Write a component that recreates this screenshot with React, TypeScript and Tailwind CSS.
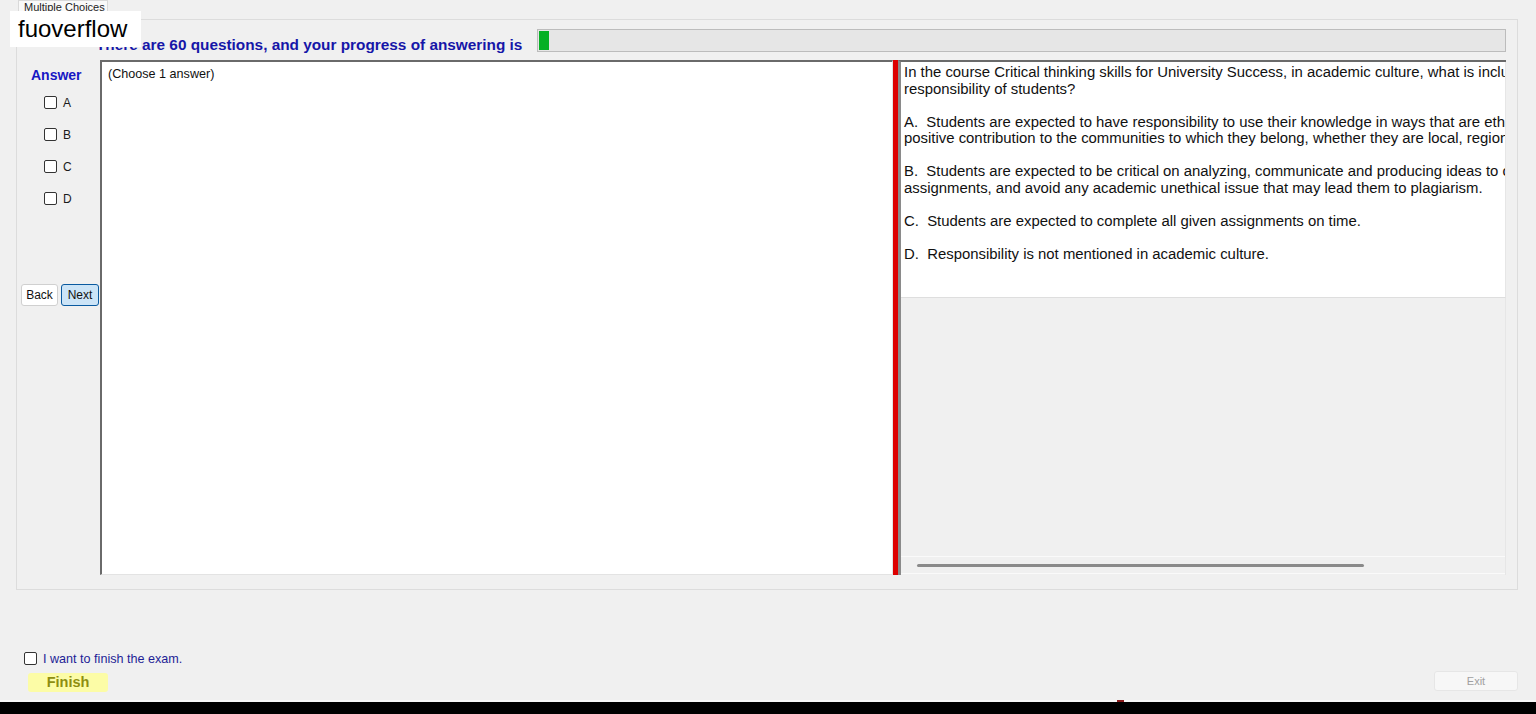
const font = { fontFamily: '"Liberation Sans", Arial, sans-serif' };

const Box = ({ label }: { label?: string }) => (
  <div className="flex items-center gap-[6px] h-[13px]">
    <div className="w-[13px] h-[13px] border border-[#333333] rounded-[2px] bg-white" />
    {label && <span className="text-[12px] text-[#1a1a1a] leading-none">{label}</span>}
  </div>
);

const lines: string[][] = [
  [
    "In the course Critical thinking skills for University Success, in academic culture, what is included in the",
    "responsibility of students?",
  ],
  [
    "A.  Students are expected to have responsibility to use their knowledge in ways that are ethical and make a",
    "positive contribution to the communities to which they belong, whether they are local, regional or global.",
  ],
  [
    "B.  Students are expected to be critical on analyzing, communicate and producing ideas to complete their",
    "assignments, and avoid any academic unethical issue that may lead them to plagiarism.",
  ],
  ["C.  Students are expected to complete all given assignments on time."],
  ["D.  Responsibility is not mentioned in academic culture."],
];

export default function App() {
  return (
    <div className="relative w-full h-[714px] bg-[#f0f0f0] flex flex-col overflow-hidden" style={font}>
      {/* watermark */}
      <div className="absolute left-[10px] top-[11px] w-[131px] h-[36px] bg-white flex items-center pl-[8px] text-[24px] text-black z-10">
        fuoverflow
      </div>

      {/* tab */}
      <div className="h-[19px] pl-[18px] flex">
        <div className="w-[90px] h-[19px] bg-[#f9f9f9] border border-[#d9d9d9] border-b-0 text-[11px] text-[#222] leading-none pl-[5px] pt-px whitespace-nowrap overflow-hidden">
          Multiple Choices
        </div>
      </div>

      {/* tab panel */}
      <div className="ml-[16px] w-[1502px] h-[571px] border border-[#dcdcdc] bg-[#f0f0f0] flex flex-col">
        <div className="h-[40px] flex items-start pt-[9px] pl-[79px] pr-[11px]">
          <span className="mt-[8px] text-[15.35px] font-bold text-[#1616a8] leading-[15px] whitespace-nowrap">
            There are 60 questions, and your progress of answering is
          </span>
          <div className="ml-[15px] flex-1 h-[23px] bg-[#e6e6e6] border border-[#bcbcbc] flex p-px">
            <div className="w-[10px] h-full bg-[#06b025]" />
          </div>
        </div>

        <div className="flex h-[515px]">
          {/* answer column */}
          <div className="w-[83px] flex flex-col items-start">
            <div className="mt-[8px] ml-[14px] text-[14px] font-bold text-[#1717c4] leading-none">Answer</div>
            <div className="mt-[14px] ml-[27px] flex flex-col gap-[19px]">
              <Box label="A" />
              <Box label="B" />
              <Box label="C" />
              <Box label="D" />
            </div>
            <div className="mt-[79px] ml-[4px] flex gap-[3px]">
              <button className="w-[37px] h-[22px] bg-white border border-[#d0d0d0] rounded-[3px] text-[12px] text-[#111] leading-none">
                Back
              </button>
              <button className="w-[38px] h-[22px] bg-[#cce4f7] border border-[#0a5aa0] rounded-[3px] text-[12px] text-[#111] leading-none">
                Next
              </button>
            </div>
          </div>

          {/* answer text box */}
          <div className="w-[793px] h-[515px] bg-white border-l-2 border-t-2 border-[#6a6a6a] border-r border-b border-r-[#e3e3e3] border-b-[#e3e3e3] pl-[6px] pt-[5px]">
            <div className="text-[12.6px] text-[#111] leading-[14px]">(Choose 1 answer)</div>
          </div>

          {/* splitter */}
          <div className="w-[5px] h-[515px] bg-[#dd0000]" />

          {/* question panel */}
          <div className="w-[608px] h-[515px] border-t-2 border-l-[3px] border-t-[#6a6a6a] border-l-[#8a8a8a] flex flex-col">
            <div className="h-[236px] bg-white border-r border-[#e6e6e6] border-b border-b-[#dedede] pl-[3px] pt-[2px] overflow-hidden">
              {lines.map((p, i) => (
                <div key={i} className={i > 0 ? "mt-[16.5px]" : ""}>
                  {p.map((l, j) => (
                    <div key={j} className="text-[14.9px] leading-[16.5px] text-[#111] whitespace-pre">
                      {l}
                    </div>
                  ))}
                </div>
              ))}
            </div>
            <div className="flex-1 flex flex-col justify-end border-r border-[#e6e6e6]">
              <div className="h-[18px] border-t border-b border-[#fafafa] flex items-center pl-[16px] mb-[1px]">
                <div className="w-[447px] h-[3px] bg-[#8a8a8a] rounded-full" />
              </div>
            </div>
          </div>
        </div>
      </div>

      {/* bottom area */}
      <div className="flex-1 flex items-end justify-between pl-[24px] pr-[18px] pb-[8px]">
        <div className="flex flex-col">
          <div className="flex items-center gap-[6px]">
            <div className="w-[13px] h-[13px] border border-[#333333] rounded-[2px] bg-white" />
            <span className="text-[12.6px] text-[#1e1e96] leading-none mt-[2px]">I want to finish the exam.</span>
          </div>
          <div className="mt-[7px] ml-[4px] w-[80px] h-[19px] bg-[#fcfca6] rounded-[3px] flex items-center justify-center text-[14.5px] font-bold text-[#8e8e10] leading-none">
            Finish
          </div>
        </div>
        <div className="w-[84px] h-[20px] bg-[#f7f7f7] border border-[#e6e6e6] rounded-[3px] flex items-center justify-center text-[11px] text-[#a0a0a0] leading-none mb-[1px]">
          Exit
        </div>
      </div>

      {/* taskbar edge */}
      <div className="h-[2px] bg-[#f8f8f8] relative">
        <div className="absolute left-[1117px] top-0 w-[7px] h-[2px] bg-[#8a1a1a]" />
      </div>
      <div className="h-[12px] bg-black" />
    </div>
  );
}
